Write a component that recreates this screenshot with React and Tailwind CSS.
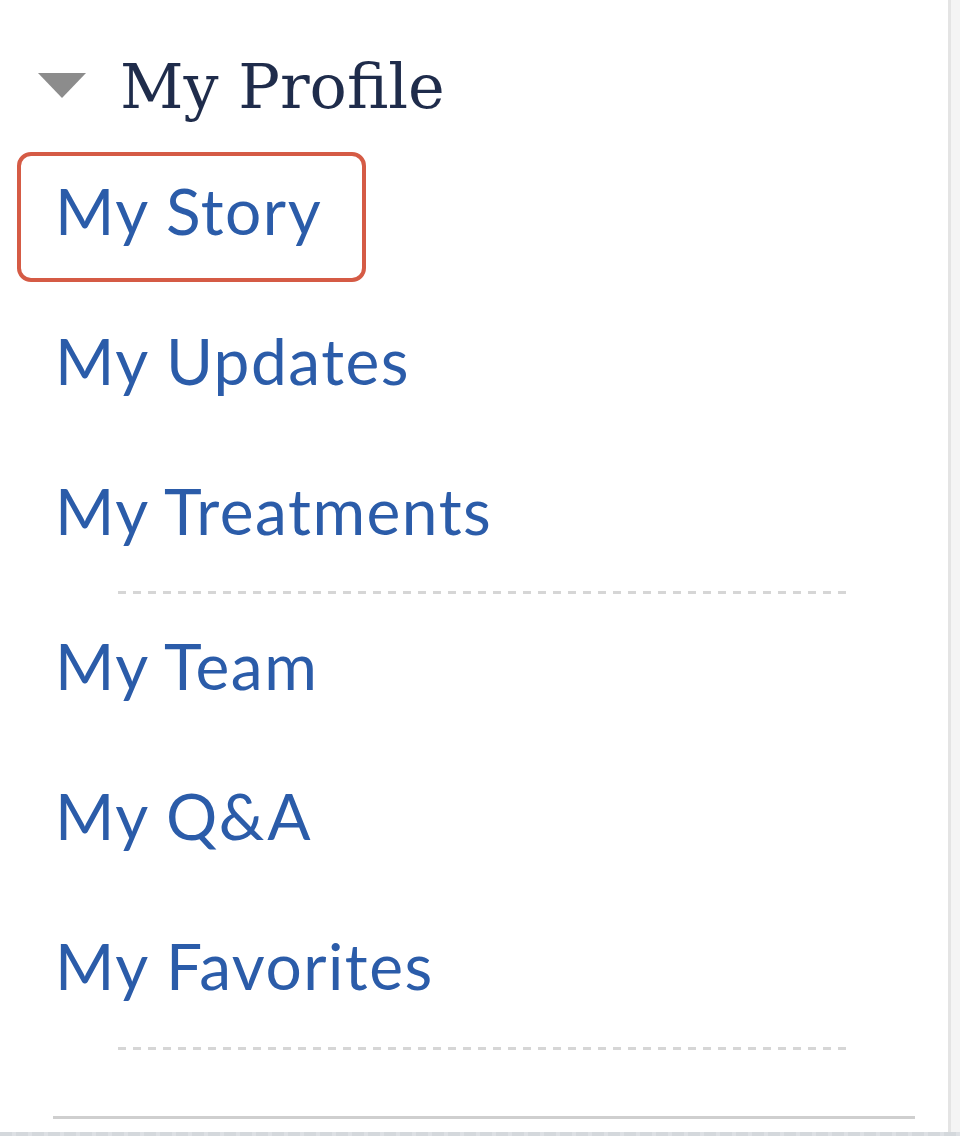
import { useState } from "react"

// Profile side menu
const groups = [
  ["My Story", "My Updates", "My Treatments"],
  ["My Team", "My Q&A", "My Favorites"],
]

function Dashes({ className }) {
  return (
    <div
      className={
        "ml-[118px] w-[732px] h-[3px] bg-[repeating-linear-gradient(90deg,#d6d6d6_0px,#d6d6d6_8px,transparent_8px,transparent_15px)] " +
        className
      }
    />
  )
}

export default function App() {
  const [active, setActive] = useState("My Story")

  return (
    <div className="flex flex-col w-[960px] h-[1136px] bg-white overflow-hidden">
      <div className="flex flex-1">
        {/* меню */}
        <div className="w-[951px] bg-white border-r-[3px] border-[#e4e4e4]">
          <div className="flex items-start h-[136px] pt-[56px] pl-[38px]">
            <svg width="48" height="25" viewBox="0 0 48 25" className="shrink-0 mt-[17px]">
              <polygon points="0,0 48,0 24,25" fill="#8c8c8c" />
            </svg>
            <span className="ml-[34px] text-[62px] leading-none text-[#1f2c4b] font-['DejaVu_Serif',serif]">
              My Profile
            </span>
          </div>

          {groups.map((items, g) => (
            <div key={g}>
              {items.map((label) => (
                <div key={label} className="h-[150px] pl-[17px] flex items-start">
                  <a
                    href="#"
                    onClick={(e) => {
                      e.preventDefault()
                      setActive(label)
                    }}
                    className={
                      "mt-[16px] inline-flex items-center h-[130px] pl-[34px] pr-[40px] pb-[12px] rounded-[14px] border-4 text-[64px] leading-none tracking-[1.5px] text-[#2b5ca9] font-['Lato',sans-serif] " +
                      (active === label ? "border-[#d55b45]" : "border-transparent")
                    }
                  >
                    {label}
                  </a>
                </div>
              ))}
              <Dashes className={g === 0 ? "mt-[5px] mb-[-3px]" : "mt-[6px]"} />
            </div>
          ))}

          <div className="mt-[66px] ml-[53px] w-[862px] h-[3px] bg-[#cfcfcf]" />
        </div>
        <div className="flex-1 bg-[#f4f4f4]" />
      </div>
      <div className="h-[4px] bg-[repeating-linear-gradient(90deg,#d4d8dc_0px,#d4d8dc_12px,#dde0e4_12px,#dde0e4_16px)]" />
    </div>
  )
}
